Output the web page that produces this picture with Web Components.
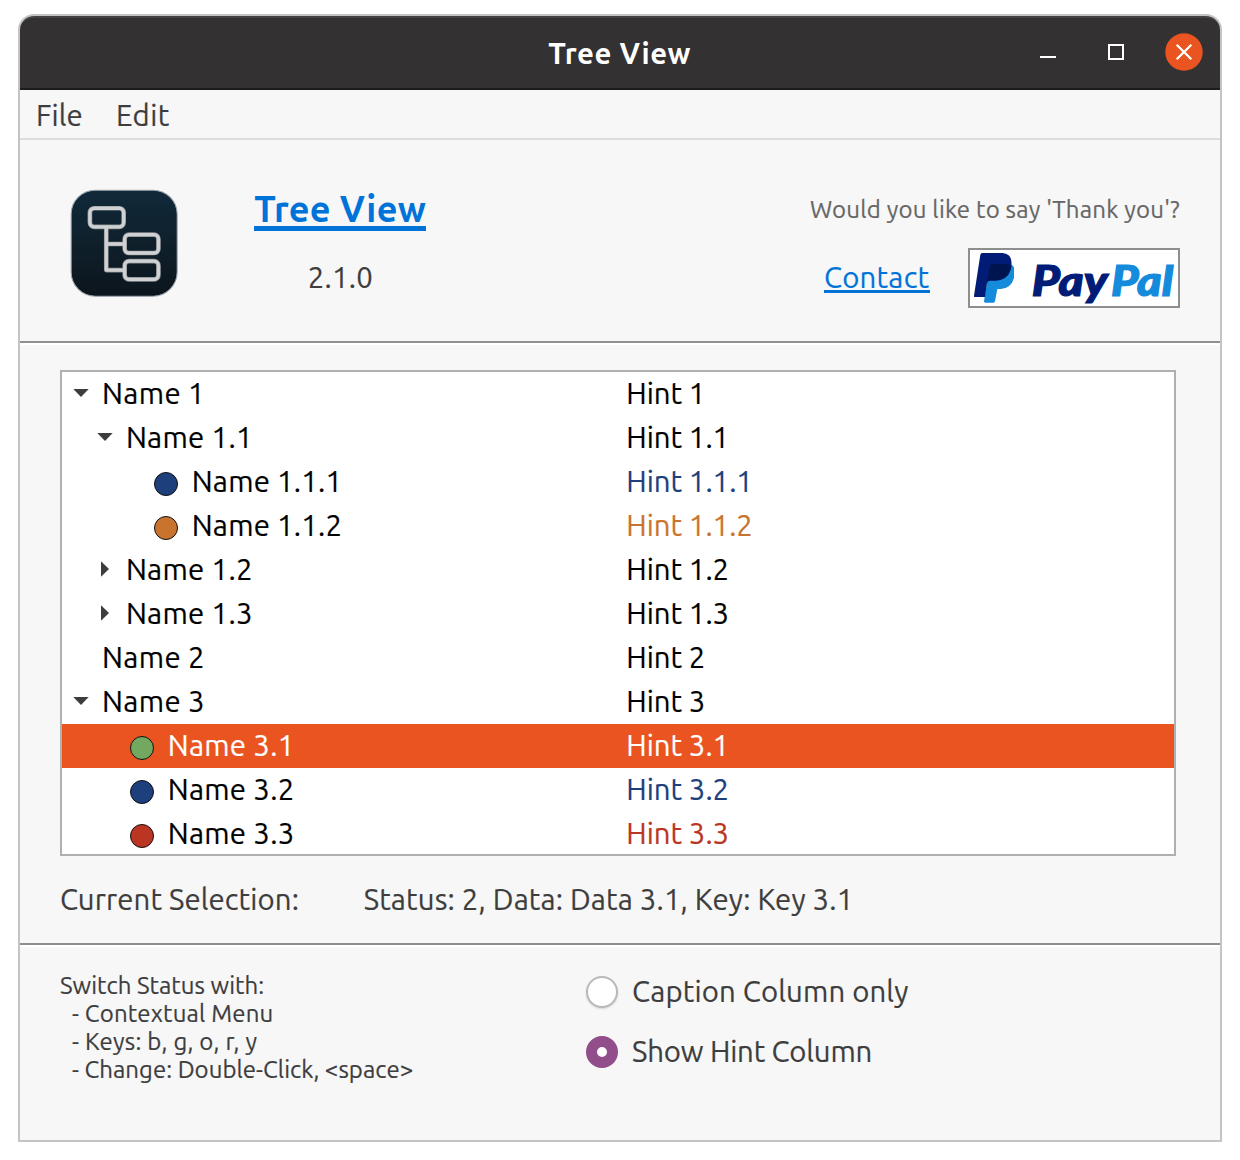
<!DOCTYPE html>
<html lang="en">
<head>
<meta charset="utf-8">
<title>Tree View</title>
<style>
html,body{margin:0;background:#fff}
body{padding:14px 18px;font-family:Ubuntu,"Noto Sans",sans-serif;color:#3d3d3d}
</style>
</head>
<body>
<app-window></app-window>
<script>
const define = (name, html, setup) => {
  const t = document.createElement('template');
  t.innerHTML = html;
  customElements.define(name, class extends HTMLElement {
    connectedCallback() {
      if (this.shadowRoot) return;
      this.attachShadow({ mode: 'open' }).append(t.content.cloneNode(true));
      if (setup) setup(this, this.shadowRoot);
    }
  });
};

/* One line of text: the host box spans cap height x inked width.
   "ls" tracks the text; a custom family is stretched to the width. */
const ctx = document.createElement('canvas').getContext('2d');
define('fit-text', `<style>
:host{display:block;flex:none}
span{display:block;width:max-content;white-space:pre;transform-origin:0 0}
</style><span></span>`, (el, root) => {
  const s = root.querySelector('span');
  const text = el.getAttribute('text');
  const size = el.getAttribute('size') || '29.333';
  const cap = +(el.getAttribute('cap') || 21);
  const weight = el.getAttribute('weight') || '400';
  const slant = el.getAttribute('slant') || 'normal';
  const family = el.getAttribute('family') || 'Ubuntu,"Noto Sans",sans-serif';
  const w = +el.getAttribute('w');
  s.textContent = text;
  s.style.font = ctx.font = `${slant} ${weight} ${size}px ${family}`;
  s.style.lineHeight = cap + 'px';
  s.style.letterSpacing = (el.getAttribute('ls') || 0) + 'px';
  if (weight === '400') s.style.webkitTextStroke = '.2px currentColor';
  const m = ctx.measureText(text);
  const k = w / (m.actualBoundingBoxLeft + m.actualBoundingBoxRight);
  const dy = Math.round(cap / 2 - (m.fontBoundingBoxAscent - m.fontBoundingBoxDescent) / 2);
  if (el.hasAttribute('family')) s.style.transform = `translate(${m.actualBoundingBoxLeft * k}px,${dy}px) scaleX(${k})`;
  else { s.style.marginTop = dy + 'px'; s.style.marginLeft = m.actualBoundingBoxLeft + 'px'; }
  el.style.width = w + 'px';
  el.style.height = cap + 'px';
});

define('title-bar', `<style>
:host{display:grid;grid-template-columns:1fr auto 1fr;box-sizing:border-box;height:74px;background:#333132;border-top:2px solid #444243;border-bottom:2px solid #1d1b1d;border-radius:14px 14px 0 0;color:#fff}
fit-text{margin-top:25px}
nav{grid-column:3;display:flex;justify-content:flex-end;padding:15px 17px 0 0}
svg{display:block}
</style><i></i><fit-text text="Tree View" weight="700" w="143.5" ls=".55"></fit-text>
<nav><svg width="166" height="38" viewBox="0 0 166 38" fill="none" stroke="#fff" stroke-width="2"><path d="M3 24H19"/><rect x="72" y="12" width="14" height="14"/><circle cx="147" cy="19" r="18.7" fill="#e95420" stroke="none"/><path d="M139.7 11.7l14.6 14.6M154.3 11.7l-14.6 14.6" stroke-width="2.3"/></svg></nav>`);

define('menu-bar', `<style>
:host{display:flex;gap:35px;box-sizing:border-box;height:50px;padding:15px 0 0 18px;border-bottom:2px solid #dcdcdc}
</style><fit-text text="File" w="45" ls=".1"></fit-text><fit-text text="Edit" w="51" ls=".4"></fit-text>`);

define('app-icon', `<style>:host,svg{display:block}</style>
<svg width="109" height="109" viewBox="30.5 27.5 326 326" fill="none">
<defs><linearGradient id="g" x2="0" y2="1"><stop stop-color="#10293a"/><stop offset=".5" stop-color="#0f202b"/><stop offset="1" stop-color="#0c151d"/></linearGradient></defs>
<rect x="34" y="31" width="317" height="317" rx="72" fill="url(#g)" stroke="#9aa3ab" stroke-width="3"/>
<g stroke="#888e92" stroke-width="14"><rect x="90" y="85" width="101" height="56" rx="13"/><rect x="194" y="164" width="101" height="55" rx="13"/><rect x="194" y="243" width="101" height="55" rx="13"/><path d="M139 146V270H188M139 192H188" stroke-linejoin="round"/></g>
<g stroke="#cfd1d2" stroke-width="10"><rect x="90" y="85" width="101" height="56" rx="13"/><rect x="194" y="164" width="101" height="55" rx="13"/><rect x="194" y="243" width="101" height="55" rx="13"/><path d="M139 141V270H194M139 192H194" stroke-linejoin="round"/></g></svg>`);

define('link-text', `<style>
:host{display:flex;flex-direction:column;color:#0073d8}
i{display:block;background:currentColor;height:var(--line);margin:var(--gap) -1px 0}
</style><slot></slot><i></i>`);

define('paypal-button', `<style>
:host{display:flex;box-sizing:border-box;width:212px;height:60px;border:2px solid #8e8e8e;background:#fff}
svg{display:block;flex:none;margin:0 0 0 2px}
div{display:flex;margin-left:19px;padding-top:15px;gap:2px;-webkit-text-stroke:1.2px currentColor}
.a{color:#001c77}.b{color:#148bdb}
</style>
<svg width="42" height="56" viewBox="36 30 126 168">
<path d="M90 72H150Q166 77 165 98Q160 145 122 147H112L105 184Q104 188 100 188H76Q72 188 72 184Z" fill="#148bdb"/>
<path d="M67 39H128Q152 41 154 64Q156 80 151 92Q142 119 108 122H90Q83 122 81 130L75 171H45Q41 171 42 167L61 44Q62 39 67 39Z" fill="#001c77"/>
<path d="M96 72H138Q148 73 153 78Q153 86 149 94Q140 118 108 121H90Q84 121 82 126L89 79Q90 72 96 72Z" fill="#001450"/></svg>
<div><fit-text class="a" text="Pay" family="Lato,sans-serif" weight="900" slant="italic" size="42" cap="31" w="77"></fit-text><fit-text class="b" text="Pal" family="Lato,sans-serif" weight="900" slant="italic" size="42" cap="31" w="62"></fit-text></div>`);

define('app-header', `<style>
:host{display:flex;box-sizing:border-box;height:201px;padding:0 40px 0 50px}
app-icon{margin-top:49px}
.name{display:flex;flex-direction:column;align-items:center;margin:56px 0 0 76px;gap:36px;height:100px}
.name link-text{--gap:4px;--line:4.5px}
.name link-text fit-text{width:170px}
.right{display:flex;flex-direction:column;align-items:flex-end;margin-left:auto;padding-top:61px;gap:30px}
.thanks{color:#666}
.row{display:flex;gap:39px}
.row link-text{--gap:2px;--line:2.5px;padding-top:19px;height:26px}
</style><app-icon></app-icon>
<div class="name"><link-text><fit-text text="Tree View" weight="700" size="36" cap="26" w="170" ls=".3" style="text-indent:-.8px"></fit-text></link-text><fit-text text="2.1.0" w="62.5" ls=".25"></fit-text></div>
<div class="right"><fit-text class="thanks" text="Would you like to say 'Thank you'?" size="24" cap="17" w="370" ls=".22"></fit-text>
<div class="row"><link-text><fit-text text="Contact" w="104" ls=".25"></fit-text></link-text><paypal-button></paypal-button></div></div>`);

define('rule-line', `<style>:host{display:block;height:2px;background:#8e8e8e;border-bottom:2px solid #fff}</style>`);

define('tree-row', `<style>
:host{display:flex;box-sizing:border-box;height:44px;color:#000}
:host([selected]){background:#e95420;color:#fff}
.cell{display:flex;box-sizing:border-box;width:566.3px}
svg{display:block;flex:none;margin-top:13px}
b{flex:none;box-sizing:border-box;width:24px;height:24px;border-radius:50%;border:1px solid #111;margin:12px 15.7px 0 17px}
fit-text{margin-top:11px}
</style><div class="cell"></div>`, (el, root) => {
  const a = n => el.getAttribute(n);
  const arrow = { open: '<path d="M.3 4H15.7L8 12Z"/>', closed: '<path d="M4 .3V15.7L12 8Z"/>' }[a('state')] || '';
  const cell = root.querySelector('.cell');
  cell.style.paddingLeft = 11 + 24 * a('level') + 'px';
  cell.innerHTML = `<svg width="16" height="16" fill="#3d3d3d">${arrow}</svg>` +
    (a('dot') ? `<b style="background:${a('dot')}"></b>` : '<span style="width:14.9px"></span>') +
    `<fit-text text="Name ${a('num')}" w="${a('nw')}" ls="${(2 / (4 + a('num').length)).toFixed(3)}"></fit-text>`;
  const hint = document.createElement('fit-text');
  hint.setAttribute('text', 'Hint ' + a('num'));
  hint.setAttribute('w', a('hw'));
  if (a('dot') && !el.hasAttribute('selected')) hint.style.color = a('dot');
  root.append(hint);
});

define('tree-view', `<style>
:host{display:block;box-sizing:border-box;width:1116px;height:486px;border:2px solid #b0b0b0;background:#fff;overflow:hidden}
</style>
<tree-row level="0" state="open" num="1" nw="97" hw="73.5"></tree-row>
<tree-row level="1" state="open" num="1.1" nw="120.7" hw="97"></tree-row>
<tree-row level="2" dot="#1d3f7b" num="1.1.1" nw="144.7" hw="120.7"></tree-row>
<tree-row level="2" dot="#c9742e" num="1.1.2" nw="147.3" hw="123"></tree-row>
<tree-row level="1" state="closed" num="1.2" nw="123.3" hw="99.5"></tree-row>
<tree-row level="1" state="closed" num="1.3" nw="123.3" hw="99.5"></tree-row>
<tree-row level="0" num="2" nw="99.3" hw="75.5"></tree-row>
<tree-row level="0" state="open" num="3" nw="99.3" hw="75.5"></tree-row>
<tree-row level="1" dot="#73a860" num="3.1" nw="120.7" hw="97" selected></tree-row>
<tree-row level="1" dot="#1d3f7b" num="3.2" nw="123.3" hw="99.5"></tree-row>
<tree-row level="1" dot="#bb3523" num="3.3" nw="123.3" hw="99.5"></tree-row>`);

define('tree-section', `<style>
:host{display:block;box-sizing:border-box;height:598px;padding:25px 40px 0}
div{display:flex;gap:66.3px;padding:33px 0 0 1px}
</style><tree-view></tree-view>
<div><fit-text text="Current Selection:" w="237.4" ls=".13"></fit-text><fit-text text="Status: 2, Data: Data 3.1, Key: Key 3.1" w="485" ls=".16"></fit-text></div>`);

define('radio-option', `<style>
:host{display:flex;align-items:flex-start;gap:15.1px}
i{display:block;box-sizing:border-box;width:32px;height:32px;border-radius:50%;background:#fff;border:2px solid #b9b9b9;box-shadow:0 1px 2px #0002}
:host([checked]) i{border:11px solid #924d8b;box-shadow:none}
::slotted(*){margin-top:5px}
</style><i></i><slot></slot>`);

define('app-footer', `<style>
:host{display:flex;box-sizing:border-box;height:193px;padding-left:40px}
.help{display:flex;flex-direction:column;gap:11px;width:526px;padding-top:30px}
.item{margin-left:12px}
.opts{display:flex;flex-direction:column;gap:28px;padding-top:29px}
</style>
<div class="help"><fit-text text="Switch Status with:" size="24" cap="17" w="202.6" ls=".03"></fit-text>
<fit-text class="item" text="- Contextual Menu" size="24" cap="17" w="200.4" ls=".18"></fit-text>
<fit-text class="item" text="- Keys: b, g, o, r, y" size="24" cap="17" w="184.8" ls=".24"></fit-text>
<fit-text class="item" text="- Change: Double-Click, &lt;space&gt;" size="24" cap="17" w="340.4" ls=".03"></fit-text></div>
<div class="opts"><radio-option><fit-text text="Caption Column only" w="274.7" ls=".15"></fit-text></radio-option>
<radio-option checked><fit-text text="Show Hint Column" w="238" ls="-.18"></fit-text></radio-option></div>`);

define('app-window', `<style>
:host{display:block;box-sizing:border-box;width:1204px;height:1128px;border:2px solid #c4c4c4;border-radius:16px 16px 0 0;background:#f7f7f7}
</style><title-bar></title-bar><menu-bar></menu-bar><app-header></app-header><rule-line></rule-line><tree-section></tree-section><rule-line></rule-line><app-footer></app-footer>`);
</script>
</body>
</html>
